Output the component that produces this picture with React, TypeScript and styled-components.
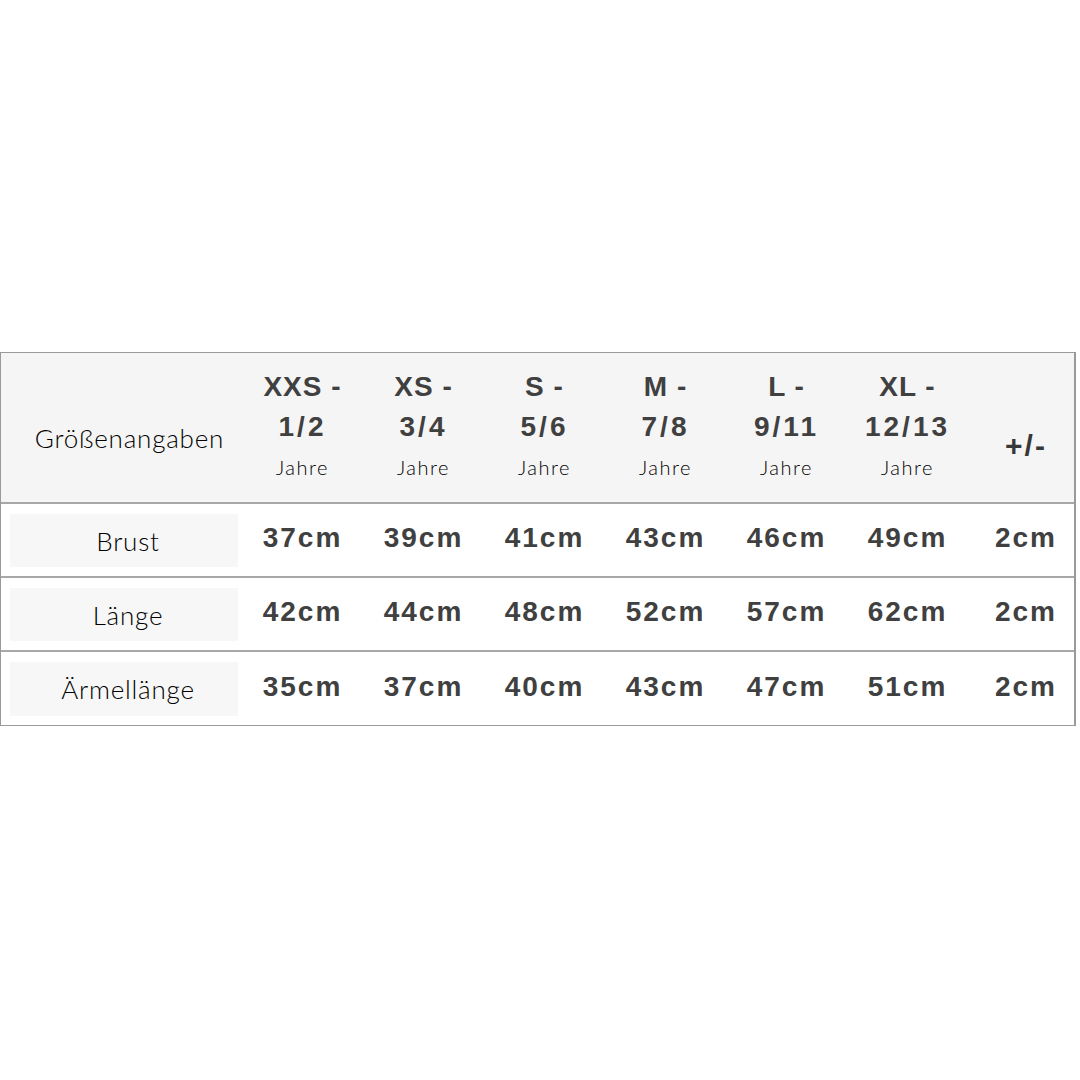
import React from 'react'
import styled, { createGlobalStyle } from 'styled-components'

type SizeColumn = {
  size: string
  years: string
}

type MeasureRow = {
  label: string
  values: string[]
}

const sizeColumns: SizeColumn[] = [
  { size: 'XXS -', years: '1/2' },
  { size: 'XS -', years: '3/4' },
  { size: 'S -', years: '5/6' },
  { size: 'M -', years: '7/8' },
  { size: 'L -', years: '9/11' },
  { size: 'XL -', years: '12/13' },
]

const measureRows: MeasureRow[] = [
  { label: 'Brust', values: ['37cm', '39cm', '41cm', '43cm', '46cm', '49cm', '2cm'] },
  { label: 'Länge', values: ['42cm', '44cm', '48cm', '52cm', '57cm', '62cm', '2cm'] },
  { label: 'Ärmellänge', values: ['35cm', '37cm', '40cm', '43cm', '47cm', '51cm', '2cm'] },
]

const GlobalStyle = createGlobalStyle`
  html, body {
    margin: 0;
    padding: 0;
    background: #ffffff;
  }
`

export default function App() {
  return (
    <>
      <GlobalStyle />
      <Page>
        <Table>
          <HeaderRow>
            <HeaderLabel>Größenangaben</HeaderLabel>
            {sizeColumns.map((col) => (
              <HeaderCell key={col.size}>
                <SizeName>{col.size}</SizeName>
                <SizeName wide>{col.years}</SizeName>
                <Years>Jahre</Years>
              </HeaderCell>
            ))}
            <ToleranceHead>+/-</ToleranceHead>
          </HeaderRow>
          {measureRows.map((row) => (
            <BodyRow key={row.label}>
              <LabelCell>
                <LabelBox>{row.label}</LabelBox>
              </LabelCell>
              {row.values.map((value, index) => (
                <ValueCell key={index} last={index === row.values.length - 1}>
                  {value}
                </ValueCell>
              ))}
            </BodyRow>
          ))}
        </Table>
      </Page>
    </>
  )
}

const Page = styled.div`
  padding-top: 352px;
  height: 1080px;
  box-sizing: border-box;
`

const Table = styled.div`
  width: 1076px;
  box-sizing: border-box;
  border: 1px solid #9a9a9a;
  border-right-width: 2px;
  background: #ffffff;
`

const columns = '241px repeat(6, 121px) 1fr'

const HeaderRow = styled.div`
  display: grid;
  grid-template-columns: ${columns};
  height: 149px;
  background: #f5f5f5;
  border-bottom: 2px solid #a8a8a8;
`

const HeaderLabel = styled.div`
  display: flex;
  align-items: center;
  justify-content: center;
  padding-top: 20px;
  padding-left: 16px;
  font-family: Lato, 'Noto Sans', sans-serif;
  font-weight: 300;
  font-size: 26px;
  letter-spacing: 0.8px;
  color: #000000;
`

const HeaderCell = styled.div`
  display: flex;
  flex-direction: column;
  align-items: center;
  padding-top: 14px;
`

const SizeName = styled.div<{ wide?: boolean }>`
  font-family: 'Liberation Sans', Arial, sans-serif;
  font-weight: 700;
  font-size: 28px;
  letter-spacing: ${({ wide }) => (wide ? '3px' : '1px')};
  line-height: 40px;
  color: #404040;
`

const Years = styled.div`
  margin-top: 2px;
  font-family: Lato, 'Noto Sans', sans-serif;
  font-weight: 300;
  font-size: 20px;
  letter-spacing: 1.5px;
  line-height: 36px;
  color: #000000;
`

const ToleranceHead = styled.div`
  display: flex;
  align-items: center;
  justify-content: center;
  padding-top: 36px;
  padding-left: 10px;
  font-family: 'Liberation Sans', Arial, sans-serif;
  font-weight: 700;
  font-size: 30px;
  letter-spacing: 2px;
  color: #383838;
`

const BodyRow = styled.div`
  display: grid;
  grid-template-columns: ${columns};
  height: 72px;
  border-bottom: 2px solid #a8a8a8;

  &:first-of-type {
    height: 73px;
  }

  &:last-child {
    border-bottom: none;
    height: 73px;
  }
`

const LabelCell = styled.div`
  display: flex;
  padding: 10px 4px 9px 9px;
`

const LabelBox = styled.div`
  flex: 1;
  display: flex;
  align-items: center;
  justify-content: center;
  padding-left: 8px;
  background: #f7f7f7;
  font-family: Lato, 'Noto Sans', sans-serif;
  font-weight: 300;
  font-size: 26px;
  letter-spacing: 0.8px;
  color: #000000;
`

const ValueCell = styled.div<{ last: boolean }>`
  display: flex;
  align-items: center;
  justify-content: center;
  padding-left: ${({ last }) => (last ? '10px' : '0')};
  padding-bottom: 4px;
  font-family: 'Liberation Sans', Arial, sans-serif;
  font-weight: 700;
  font-size: 28px;
  letter-spacing: 2px;
  color: #404040;
`
